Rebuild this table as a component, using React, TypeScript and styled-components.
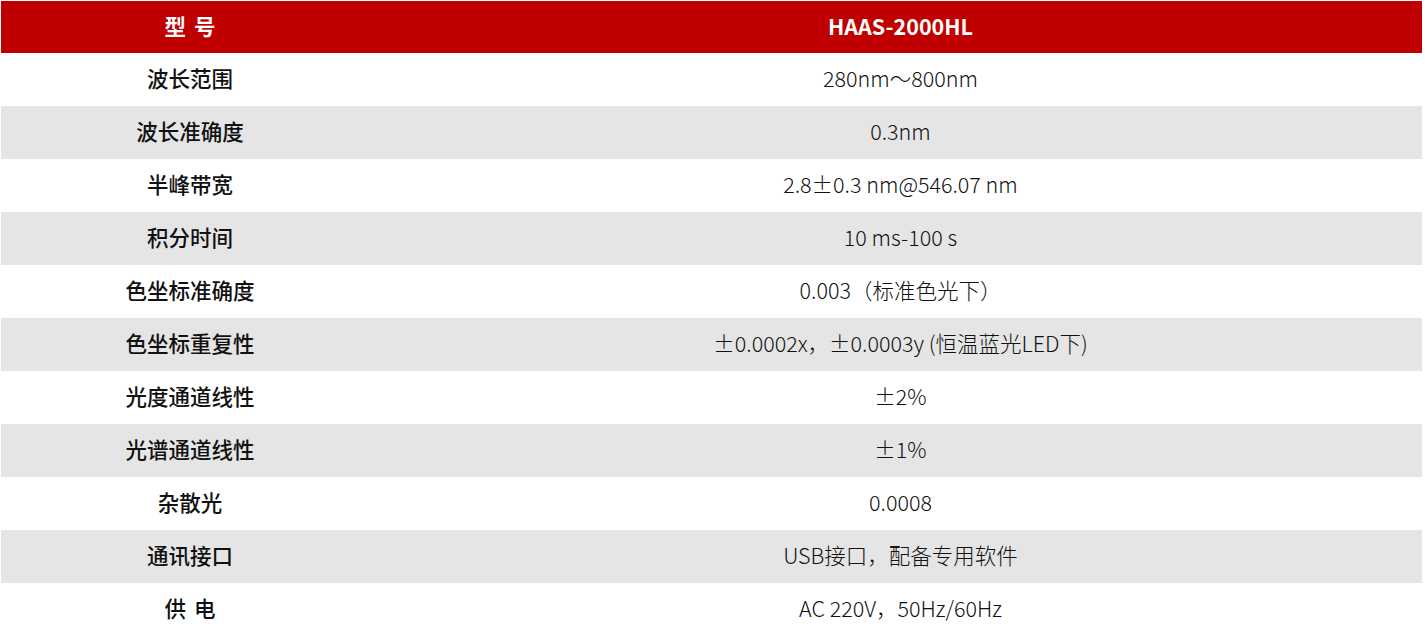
import React from "react";
import styled, { createGlobalStyle } from "styled-components";

const Global = createGlobalStyle`
  html, body { margin: 0; padding: 0; background: #fff; }
  body { font-family: "Noto Sans CJK SC", "Noto Sans", sans-serif; }
`;

const Table = styled.div`
  margin: 1px 3px 0 1px;
  display: grid;
  grid-template-columns: 378px 1fr;
`;

const Row = styled.div<{ $variant: "head" | "white" | "grey" }>`
  display: contents;
  & > div {
    background: ${(p) =>
      p.$variant === "head" ? "#c00000" : p.$variant === "grey" ? "#e5e5e5" : "#ffffff"};
    color: ${(p) => (p.$variant === "head" ? "#ffffff" : "#111111")};
    height: ${(p) => (p.$variant === "head" ? "52px" : "53px")};
  }
`;

const Cell = styled.div<{ $label?: boolean; $head?: boolean }>`
  display: flex;
  align-items: center;
  justify-content: center;
  box-sizing: border-box;
  padding-bottom: 4px;
  font-size: 21.5px;
  font-weight: ${(p) => (p.$head ? 700 : p.$label ? 500 : 300)};
  word-spacing: ${(p) => (p.$head || p.$label ? "3px" : "0")};
  white-space: pre;
`;

const rows: [string, string][] = [
  ["波长范围", "280nm～800nm"],
  ["波长准确度", "0.3nm"],
  ["半峰带宽", "2.8±0.3 nm@546.07 nm"],
  ["积分时间", "10 ms-100 s"],
  ["色坐标准确度", "0.003（标准色光下）"],
  ["色坐标重复性", "±0.0002x，±0.0003y (恒温蓝光LED下)"],
  ["光度通道线性", "±2%"],
  ["光谱通道线性", "±1%"],
  ["杂散光", "0.0008"],
  ["通讯接口", "USB接口，配备专用软件"],
  ["供 电", "AC 220V，50Hz/60Hz"],
];

export default function App() {
  return (
    <>
      <Global />
      <Table>
        <Row $variant="head">
          <Cell $head>型 号</Cell>
          <Cell $head>HAAS-2000HL</Cell>
        </Row>
        {rows.map(([k, v], i) => (
          <Row key={k} $variant={i % 2 === 0 ? "white" : "grey"}>
            <Cell $label>{k}</Cell>
            <Cell>{v}</Cell>
          </Row>
        ))}
      </Table>
    </>
  );
}
